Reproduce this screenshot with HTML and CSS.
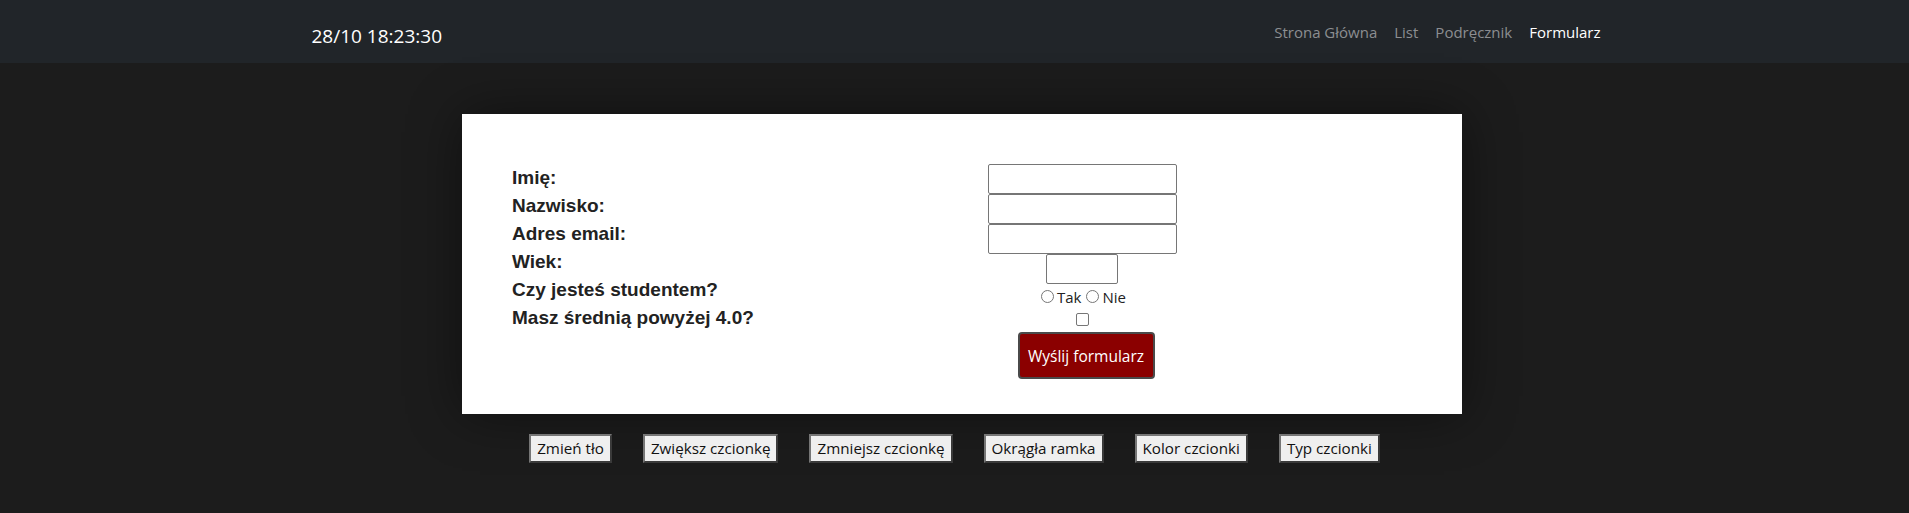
FILE: index.html
```html
<!DOCTYPE html>
<html lang="pl">
<head>
<meta charset="utf-8">
<title>Formularz</title>
<link rel="stylesheet" href="styles.css">
</head>
<body>
<nav class="navbar">
  <div class="nav-inner">
    <span class="brand">28/10 18:23:30</span>
    <ul class="nav-links">
      <li><a href="#" class="nav-link">Strona Główna</a></li>
      <li><a href="#" class="nav-link">List</a></li>
      <li><a href="#" class="nav-link">Podręcznik</a></li>
      <li><a href="#" class="nav-link active">Formularz</a></li>
    </ul>
  </div>
</nav>
<main class="page">
  <form class="card">
    <div class="labels">
      <label>Imię:</label>
      <label>Nazwisko:</label>
      <label>Adres email:</label>
      <label>Wiek:</label>
      <label>Czy jesteś studentem?</label>
      <label>Masz średnią powyżej 4.0?</label>
    </div>
    <div class="fields">
      <input type="text" class="text-input">
      <input type="text" class="text-input">
      <input type="email" class="text-input">
      <input type="text" class="text-input age">
      <div class="radio-row">
        <span class="radio"></span><span class="radio-label">Tak</span>
        <span class="radio"></span><span class="radio-label">Nie</span>
      </div>
      <div class="check-row"><span class="checkbox"></span></div>
      <button type="button" class="submit">Wyślij formularz</button>
    </div>
  </form>
  <div class="tools">
    <button type="button" class="tool">Zmień tło</button>
    <button type="button" class="tool">Zwiększ czcionkę</button>
    <button type="button" class="tool">Zmniejsz czcionkę</button>
    <button type="button" class="tool">Okrągła ramka</button>
    <button type="button" class="tool">Kolor czcionki</button>
    <button type="button" class="tool">Typ czcionki</button>
  </div>
</main>
</body>
</html>
```

FILE: styles.css
```css
* { box-sizing: border-box; }

body {
  margin: 0;
  background: #1c1c1c;
  font-family: "Open Sans", "Noto Sans", sans-serif;
  font-size: 16px;
  height: 513px;
  overflow: hidden;
}

.navbar {
  background: #212529;
  height: 63px;
}

.nav-inner {
  width: 1292px;
  margin: 0 auto;
  height: 100%;
  display: flex;
  align-items: center;
  justify-content: space-between;
  padding-left: 3px;
}

.brand {
  color: #fff;
  font-size: 19px;
  line-height: 30px;
  margin-top: 8px;
}

.nav-links {
  list-style: none;
  margin: 0;
  padding: 0;
  display: flex;
  gap: 17px;
}

.nav-link {
  color: #8c8e91;
  text-decoration: none;
  font-size: 15px;
  line-height: 24px;
}

.nav-link.active { color: #fff; }

.page {
  padding-top: 51px;
}

.card {
  width: 1000px;
  height: 300px;
  margin-left: calc(50% - 492.5px);
  background: #fff;
  padding: 50px 50px 0;
  display: grid;
  grid-template-columns: 400px 340px;
  box-shadow: 0 0 50px rgba(0, 0, 0, 0.45);
}

.labels {
  display: flex;
  flex-direction: column;
}

.labels label {
  font-family: "Liberation Sans", Arial, sans-serif;
  font-weight: bold;
  font-size: 19px;
  line-height: 28px;
  color: #222;
}

.fields {
  display: flex;
  flex-direction: column;
  align-items: center;
}

.text-input {
  display: block;
  width: 189px;
  height: 30px;
  margin: 0;
  border: 1px solid #767676;
  border-radius: 2px;
  background: #fff;
}

.text-input.age { width: 72px; }

.radio-row {
  height: 25px;
  display: flex;
  align-items: center;
  font-size: 15px;
  color: #222;
}

.radio {
  width: 13px;
  height: 13px;
  border: 1px solid #767676;
  border-radius: 50%;
  margin: 0 3px 0 4px;
}

.radio-label { margin-right: 1px; }

.check-row {
  height: 20px;
  padding-top: 4px;
}

.checkbox {
  display: block;
  width: 13px;
  height: 13px;
  border: 1px solid #767676;
  border-radius: 2px;
}

.submit {
  margin-top: 3px;
  margin-left: 8px;
  width: 137px;
  height: 47px;
  background: #8b0000;
  color: #fff;
  border: 2px solid #4a4a4a;
  border-radius: 4px;
  font-family: "Open Sans", "Noto Sans", sans-serif;
  font-size: 15.5px;
  padding: 0;
}

.tools {
  display: flex;
  justify-content: center;
  gap: 31px;
  margin-top: 20px;
}

.tool {
  background: #efefef;
  color: #111;
  font-family: "Open Sans", "Noto Sans", sans-serif;
  font-size: 15.2px;
  line-height: 21px;
  padding: 2px 6px;
  border-width: 2px;
  border-style: solid;
  border-color: #767676 #3a3a3a #3a3a3a #767676;
  border-radius: 0;
}
```
